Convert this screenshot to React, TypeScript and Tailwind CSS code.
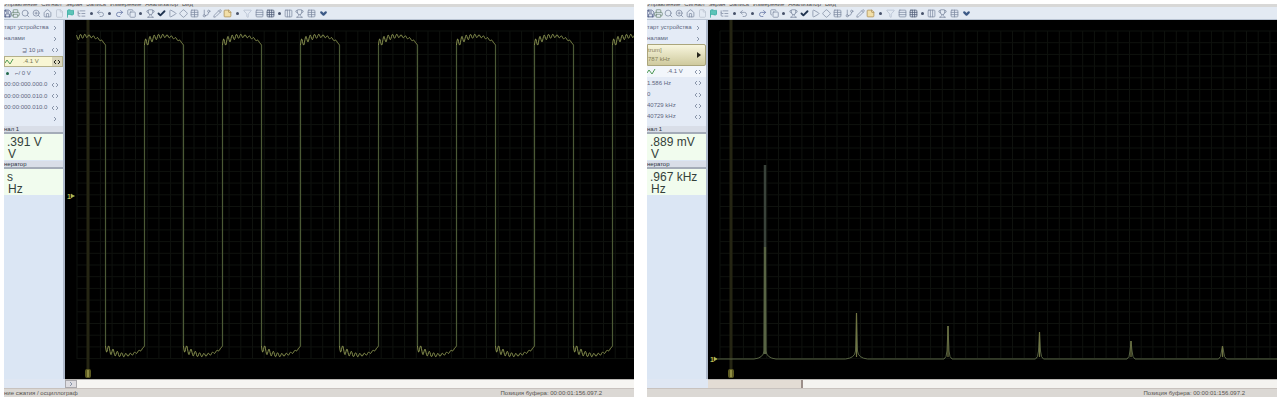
import React from "react";
import {
  Save, Printer, Search, ZoomIn, Home, File, Flag, ListTree, Undo2, Redo2, Copy, Trophy,
  Check, Play, Diamond, Table, GitBranch, Pencil, StickyNote, Filter, Rows3, Grid3x3,
  Columns3, ChevronDown, type LucideIcon,
} from "lucide-react";

type Tool = { label: string; icon?: LucideIcon; width: string; tone?: string };

const CARET = "w-2";
const TOOLS: Tool[] = [
  { label: "Сохранить", icon: Save, width: "w-1.5", tone: "text-[#44507c]" },
  { label: "Печать", icon: Printer, width: "w-2.5", tone: "text-[#6f8a78]" },
  { label: "Поиск", icon: Search, width: "w-[11px]" },
  { label: "Увеличить", icon: ZoomIn, width: "w-[11px]" },
  { label: "Начало", icon: Home, width: "w-[11px]" },
  { label: "Документ", icon: File, width: "w-3", tone: "text-[#b9c2cf]" },
  { label: "Старт", icon: Flag, width: "w-[11px]", tone: "text-[#2fa79b] fill-[#5cc4b8]" },
  { label: "Список", icon: ListTree, width: "w-[11px]" },
  { label: "Меню списка", width: CARET },
  { label: "Отменить", icon: Undo2, width: "w-2.5" },
  { label: "Меню отмены", width: CARET },
  { label: "Повторить", icon: Redo2, width: "w-[13px]", tone: "text-[#5d6fa0]" },
  { label: "Копировать", icon: Copy, width: "w-2.5" },
  { label: "Меню копирования", width: CARET },
  { label: "Уровень", icon: Trophy, width: "w-3" },
  { label: "Применить", icon: Check, width: "w-[11px]", tone: "text-[#20334f] stroke-[5]" },
  { label: "Пуск", icon: Play, width: "w-[11px]" },
  { label: "Маркер", icon: Diamond, width: "w-[11px]" },
  { label: "Таблица", icon: Table, width: "w-[11px]" },
  { label: "Каналы", icon: GitBranch, width: "w-3" },
  { label: "Правка", icon: Pencil, width: "w-2.5" },
  { label: "Заметка", icon: StickyNote, width: "w-[11px]", tone: "text-[#a98d55] fill-[#f2dfa8]" },
  { label: "Меню заметки", width: CARET },
  { label: "Фильтр", icon: Filter, width: "w-3", tone: "text-[#b4bfd0]" },
  { label: "Строки", icon: Rows3, width: "w-3" },
  { label: "Сетка", icon: Grid3x3, width: "w-2.5", tone: "text-[#4c5a74]" },
  { label: "Меню сетки", width: CARET },
  { label: "Столбцы", icon: Columns3, width: "w-[11px]" },
  { label: "Кубок", icon: Trophy, width: "w-[11px]" },
  { label: "Ячейки", icon: Table, width: "w-[13px]" },
  { label: "Ещё", icon: ChevronDown, width: "w-[11px]", tone: "text-[#3c5a86] stroke-[6]" },
];

const MENUS = ["Управление", "Сигнал", "Экран", "Запись", "Измерение", "Анализатор", "Вид"];

function Toolbar() {
  return (
    <div className="flex h-[13px] items-center overflow-hidden border-b border-[#b9c4d3] bg-[#e3eaf3]">
      {TOOLS.map(({ label, icon: Icon, width, tone }) => (
        <button key={label} aria-label={label} className={`flex h-3 shrink-0 items-center justify-center ${width}`}>
          {Icon ? (
            <Icon className={`size-[9px] shrink-0 ${tone ?? "text-[#7d8aa0]"}`} />
          ) : (
            <span className="size-[3px] rounded-full bg-[#47526a]" />
          )}
        </button>
      ))}
    </div>
  );
}

function Stepper({ dark = false, single = false }: { dark?: boolean; single?: boolean }) {
  return (
    <svg viewBox="0 0 8 6" className={`h-1.5 w-2 shrink-0 fill-none ${dark ? "stroke-[#22241c]" : "stroke-[#8a96aa]"}`}>
      {single ? <path d="M3 1L5 3L3 5" /> : <path d="M3 1L1 3L3 5M5 1L7 3L5 5" />}
    </svg>
  );
}

function Row({ children, single = false, height = "h-[11px]" }: { children?: React.ReactNode; single?: boolean; height?: string }) {
  return (
    <div className={`flex items-center justify-between pr-1 ${height}`}>
      <span className="flex min-w-0 flex-1 items-center gap-0.5 whitespace-nowrap">{children}</span>
      <Stepper single={single} />
    </div>
  );
}

function Wave() {
  return (
    <svg viewBox="0 0 10 8" className="h-2 w-2.5 shrink-0 fill-none stroke-[#4e9a55]">
      <path d="M0 5L2 2L5 6L8 1" />
    </svg>
  );
}

function Reading({ title, value, detail }: { title: string; value: string; detail: string }) {
  return (
    <section>
      <h2 className="h-2 border-b-2 border-[#a4acb8] bg-[#d9dee8] text-[6px] leading-[6px] text-[#2d3340]">
        {title}
      </h2>
      <div className="h-[26px] bg-[#f1fcee] pt-0.5 text-xs leading-3 text-[#34413a]">
        <p className="pl-[3px] whitespace-nowrap">{value}</p>
        <p className="pl-1 whitespace-nowrap">{detail}</p>
      </div>
    </section>
  );
}

function Sidebar({ children, readings }: { children: React.ReactNode; readings: React.ReactNode }) {
  return (
    <aside className="flex w-[61px] shrink-0 flex-col overflow-hidden border-r-2 border-[#aeb9cb] bg-[#dbe6f4] text-[6px] leading-[9px] text-[#5d667e]">
      <div className="h-[106px] bg-[#e4ebf6] pt-0.5">{children}</div>
      <div className="flex flex-col gap-px">{readings}</div>
    </aside>
  );
}

const CELL = 11.7;

function Grid() {
  const xs = Array.from({ length: 48 }, (_, i) => 12 + i * CELL);
  const ys = Array.from({ length: 29 }, (_, i) => 11 + i * CELL);
  return (
    <g stroke="#0f120e">
      {xs.map((x) => <line key={`x${x}`} x1={x} x2={x} y1={11} y2={339} />)}
      {ys.map((y) => <line key={`y${y}`} x1={12} x2={569} y1={y} y2={y} />)}
    </g>
  );
}

function Cursor({ x, level }: { x: number; level: number }) {
  return (
    <>
      <line x1={x} x2={x} y1={0} y2={353} stroke="#252513" strokeWidth={3} />
      <rect x={x - 3} y={349} width={6} height={9} rx={2} fill="#5c5a20" />
      <rect x={x - 1} y={350} width={2} height={7} fill="#8f8c43" />
      <text x={2} y={level + 3} fontSize={7} fontWeight={700} fill="#b5bd55">1</text>
      <path d={`M6 ${level - 2}L9 ${level}L6 ${level + 2}ZM7 ${level}H10`} fill="#b5bd55" stroke="#b5bd55" strokeWidth={0.6} />
    </>
  );
}

const HALF = 39;

// One half period: a damped ripple riding on a shallow arch.
function plateau(start: number, from: number, sign: 1 | -1) {
  const flat = sign === 1 ? 25 : 326;
  const points: string[] = [];
  for (let t = from; t <= HALF; t += 0.5) {
    const arch = 9 * Math.max(0, Math.sin((Math.PI * t) / HALF)) ** 0.65;
    const ripple = 4.5 * Math.exp(-t / 20) * Math.sin((t * 2 * Math.PI) / 4.3);
    points.push(`${start + t} ${(flat - sign * (arch + ripple)).toFixed(1)}`);
  }
  return `M${points.join("L")}`;
}

function Waveform() {
  const falls = Array.from({ length: 7 }, (_, i) => 40.5 + i * 78);
  return (
    <>
      <g fill="none" stroke="#4b5935" strokeWidth={1.2}>
        {falls.map((x) => (
          <path key={x} d={`M${x} 25V326M${x + HALF} 326V25`} />
        ))}
      </g>
      <g fill="none" stroke="#87904f" strokeWidth={1}>
        <path d={plateau(1.5, 10, 1)} />
        {falls.map((x) => (
          <path key={x} d={plateau(x, 0, -1) + plateau(x + HALF, 0, 1)} />
        ))}
      </g>
    </>
  );
}

const PEAKS = [
  { x: 57, top: 145 },
  { x: 148.5, top: 293 },
  { x: 240, top: 306 },
  { x: 331.5, top: 312 },
  { x: 423, top: 321 },
  { x: 514.5, top: 326 },
];

function Spectrum() {
  return (
    <g fill="none" stroke="#586444">
      <path
        d={`M10 339${PEAKS.map(({ x, top }) => {
          const r = top < 300 ? 11 : 4;
          return `H${x - r}Q${x - 1.5} 338 ${x - 1} 331L${x} ${top}L${x + 1} 331Q${x + 1.5} 338 ${x + r} 339`;
        }).join("")}H569`}
      />
      <path d="M57 227V334" strokeWidth={2.5} />
      <path d="M57 145V227" stroke="#39423a" strokeWidth={2.5} />
      {PEAKS.slice(1).map(({ x, top }) => (
        <path key={x} d={`M${x} ${top}V337`} stroke="#707442" strokeWidth={1.2} />
      ))}
    </g>
  );
}

function Scope({ title, cursor, level, children }: { title: string; cursor: number; level: number; children: React.ReactNode }) {
  return (
    <svg role="img" aria-label={title} viewBox="0 0 569 359" className="block h-auto min-w-0 flex-1 bg-black">
      <Grid />
      <Cursor x={cursor} level={level} />
      {children}
    </svg>
  );
}

function Window({ sidebar, scope, scrollbar, status }: { sidebar: React.ReactNode; scope: React.ReactNode; scrollbar: React.ReactNode; status: string }) {
  return (
    <article className="min-w-0 overflow-hidden bg-[#dbd8d4]">
      <nav className="flex h-[3px] items-end gap-1 overflow-hidden bg-[#d8d8d7] text-[6px] leading-[6px] text-[#4c4c50]">
        {MENUS.map((name) => <button key={name} className="shrink-0">{name}</button>)}
      </nav>
      <Toolbar />
      <div className="flex">
        {sidebar}
        {scope}
      </div>
      <div className="flex h-[9px]">
        <div className="w-[61px] shrink-0 bg-[#dfe7f3]" />
        {scrollbar}
      </div>
      <footer className="flex h-[9px] items-center border-t border-[#c8c2be] text-[6px] leading-[8px] text-[#55534f]">
        <span className="flex-1 whitespace-nowrap">{status}</span>
        <span className="pr-8 whitespace-nowrap">Позиция буфера: 00:00:01:156.097.2</span>
      </footer>
    </article>
  );
}

export default function App() {
  return (
    <main className="grid grid-cols-2 gap-[13px] bg-white pt-1 pr-[5px] pb-[5px] pl-1 font-['Liberation_Sans',Arial,sans-serif]">
      <Window
        status="ние сжатия / осциллограф"
        sidebar={
          <Sidebar
            readings={
              <>
                <Reading title="нал 1" value=".391 V" detail=" V" />
                <Reading title="нератор" value=" s" detail=" Hz" />
              </>
            }
          >
            <Row single>тарт устройства</Row>
            <Row single>налами</Row>
            <Row height="h-3"><span className="pl-[18px]">⊒ 10 µs</span></Row>
            <div className="flex h-[11px] items-center border border-[#b4b08a] bg-[#f8f6d4] text-[#777552]">
              <Wave />
              <span className="flex-1 pl-2">.4.1 V</span>
              <span className="flex h-full items-center bg-[#d8d5bb] px-px"><Stepper dark /></span>
            </div>
            <Row height="h-3" single>
              <span className="ml-0.5 size-[3px] rounded-full bg-[#21694b]" />
              <span className="pl-1">⌐/ 0 V</span>
            </Row>
            <Row>00:00:000.000.0</Row>
            <Row height="h-3">00:00:000.010.0</Row>
            <Row>00:00:000.010.0</Row>
            <Row single />
          </Sidebar>
        }
        scope={
          <Scope title="Осциллограмма" cursor={23} level={176}>
            <Waveform />
          </Scope>
        }
        scrollbar={
          <div className="flex flex-1 border-t border-[#bab8b4] bg-[#f6f5f2]">
            <button aria-label="Прокрутить влево" className="flex w-3 items-center justify-center border border-[#aaa9ad] bg-[#dedde1]">
              <Stepper single />
            </button>
          </div>
        }
      />
      <Window
        status=""
        sidebar={
          <Sidebar
            readings={
              <>
                <Reading title="нал 1" value=".889 mV" detail=" V" />
                <Reading title="нератор" value=".967 kHz" detail=" Hz" />
              </>
            }
          >
            <Row single>тарт устройства</Row>
            <Row single>налами</Row>
            <div className="flex h-[22px] items-center justify-between rounded-r-xs border border-[#aaa57c] bg-linear-to-b from-[#f8f6de] to-[#cfca9e] pr-1 text-[#857f58]">
              <div>
                <p>trum]</p>
                <p>787 kHz</p>
              </div>
              <svg viewBox="0 0 4 6" className="h-1.5 w-1 fill-[#25241b]"><path d="M0 0L4 3L0 6Z" /></svg>
            </div>
            <div className="bg-[#f2f6fb]">
              <Row><Wave /><span className="pl-2">.4.1 V</span></Row>
            </div>
            <Row height="h-3">1.586 Hz</Row>
            <Row>0</Row>
            <Row>40729 kHz</Row>
            <Row>40729 kHz</Row>
          </Sidebar>
        }
        scope={
          <Scope title="Спектр" cursor={23} level={339}>
            <Spectrum />
          </Scope>
        }
        scrollbar={
          <div className="flex flex-1 border-t border-[#bab8b4] bg-[#f4f3f0]">
            <button aria-label="Полоса прокрутки" className="w-1/6 border-r-2 border-[#9b8e89] bg-[#e3dcd4]" />
          </div>
        }
      />
    </main>
  );
}
